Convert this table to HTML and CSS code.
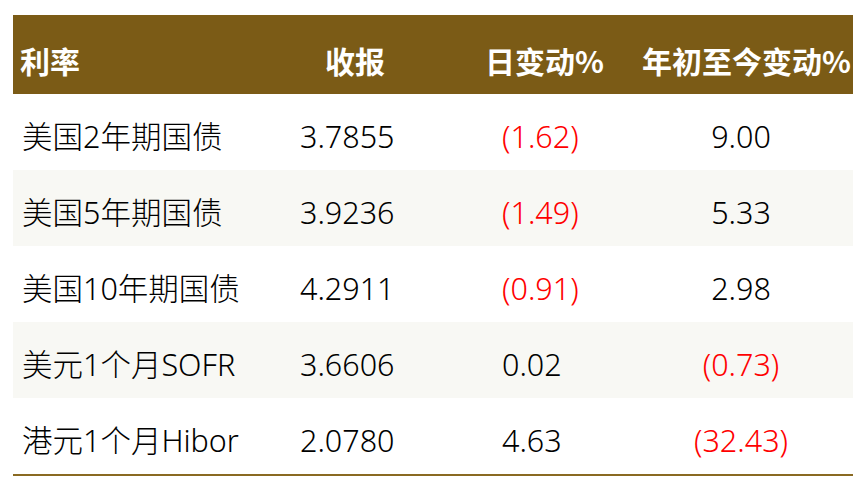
FILE: index.html
```html
<!DOCTYPE html>
<html lang="zh">
<head>
<meta charset="utf-8">
<link rel="stylesheet" href="styles.css">
</head>
<body>
<div class="table">
  <div class="row head">
    <div class="c1">利率</div>
    <div class="c2">收报</div>
    <div class="c3">日变动%</div>
    <div class="c4">年初至今变动%</div>
  </div>
  <div class="row">
    <div class="c1">美国2年期国债</div>
    <div class="c2">3.7855</div>
    <div class="c3 neg">(1.62)</div>
    <div class="c4">9.00</div>
  </div>
  <div class="row alt">
    <div class="c1">美国5年期国债</div>
    <div class="c2">3.9236</div>
    <div class="c3 neg">(1.49)</div>
    <div class="c4">5.33</div>
  </div>
  <div class="row">
    <div class="c1">美国10年期国债</div>
    <div class="c2">4.2911</div>
    <div class="c3 neg">(0.91)</div>
    <div class="c4">2.98</div>
  </div>
  <div class="row alt">
    <div class="c1">美元1个月SOFR</div>
    <div class="c2">3.6606</div>
    <div class="c3">0.02</div>
    <div class="c4 neg">(0.73)</div>
  </div>
  <div class="row last">
    <div class="c1">港元1个月Hibor</div>
    <div class="c2">2.0780</div>
    <div class="c3">4.63</div>
    <div class="c4 neg">(32.43)</div>
  </div>
</div>
</body>
</html>
```

FILE: styles.css
```css
html, body {
  margin: 0;
  padding: 0;
  background: #ffffff;
}
body {
  padding: 15px 0 0 13px;
  font-family: "Noto Sans", "Noto Sans CJK SC", sans-serif;
  color: #000;
}
.table {
  width: 840px;
  border-bottom: 2px solid #8a6a22;
}
.row {
  display: grid;
  grid-template-columns: 277px 190px 140px 233px;
  height: 76px;
  align-items: center;
  font-size: 30.5px;
  font-weight: 300;
  line-height: 1;
}
.row > div {
  padding-top: 8px;
  white-space: nowrap;
}
.alt {
  background: #f8f8f4;
}
.head {
  height: 79px;
  background: #7b5b16;
  color: #ffffff;
  font-weight: bold;
  font-family: "Noto Sans CJK SC", sans-serif;
  font-size: 30px;
}
.head > div {
  padding-top: 10px;
}
.c1 { padding-left: 9px; }
.c2 { padding-left: 10px; }
.c3 { padding-left: 22px; }
.c4 { text-align: center; padding-left: 9px; }
.head .c1 { padding-left: 7px; }
.head .c2 { padding-left: 35px; }
.head .c3 { padding-left: 5px; }
.head .c4 { text-align: left; padding-left: 22px; }
.neg { color: #ff0000; }
```
